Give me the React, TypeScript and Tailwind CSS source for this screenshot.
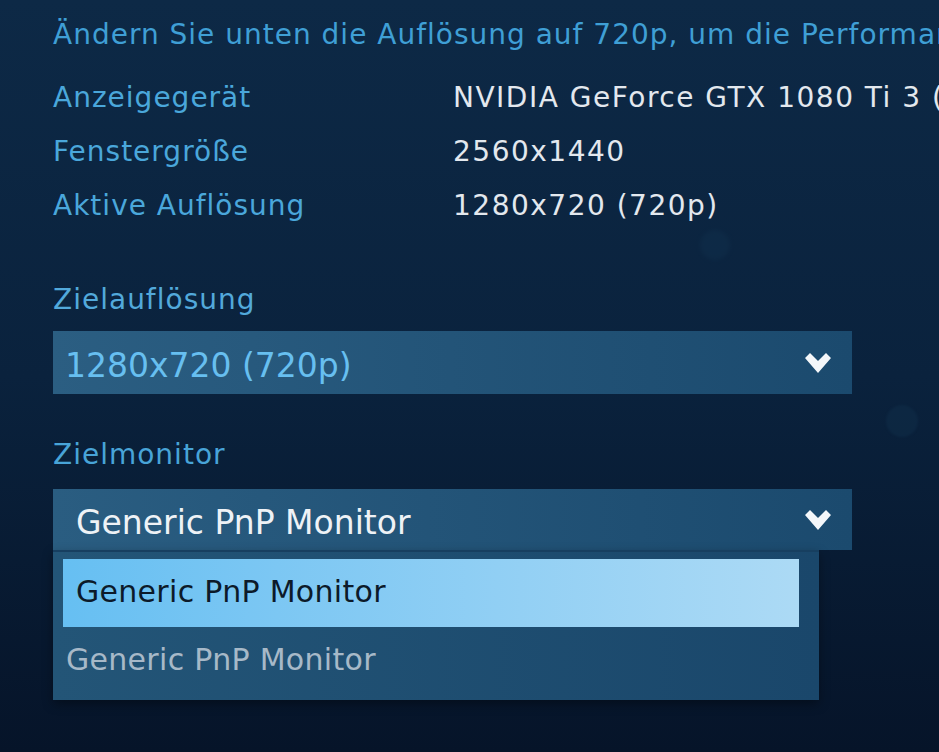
const rows = [
  ["Anzeigegerät", "NVIDIA GeForce GTX 1080 Ti 3 (NVIDIA)"],
  ["Fenstergröße", "2560x1440"],
  ["Aktive Auflösung", "1280x720 (720p)"],
];

function Chevron() {
  return (
    <svg width="26" height="20" viewBox="0 0 26 20" className="shrink-0">
      <polygon points="0,5 5,0 13,8 21,0 26,5 13,20" fill="#f4f7fa" />
    </svg>
  );
}

export default function App() {
  return (
    <div className="relative h-[752px] w-[939px] overflow-hidden bg-linear-to-b from-[#0d2946] via-[#0a223d] to-[#061429] font-['DejaVu_Sans',sans-serif]">
      <div className="pointer-events-none absolute left-[700px] top-[230px] h-[30px] w-[30px] rounded-full bg-[#12324f] opacity-40 blur-[2px]" />
      <div className="pointer-events-none absolute left-[886px] top-[405px] h-[32px] w-[32px] rounded-full bg-[#0f2c47] opacity-60 blur-[1px]" />

      <div className="relative whitespace-nowrap pl-[53px] pt-[17px]">
        <div className="h-[36px] text-[28px] leading-[36px] tracking-[1px] text-[#3f9fd5]">
          Ändern Sie unten die Auflösung auf 720p, um die Performance zu verbessern.
        </div>

        <div className="mt-[18px]">
          {rows.map(([label, value]) => (
            <div key={label} className="flex h-[54px] items-center leading-[54px]">
              <div className="w-[400px] shrink-0 text-[28px] tracking-[1px] text-[#4aa7db]">{label}</div>
              <div className="text-[28px] tracking-[1.5px] text-[#e3e8ee]">{value}</div>
            </div>
          ))}
        </div>

        <div className="mt-[49px] h-[36px] text-[28px] leading-[36px] tracking-[1px] text-[#52a9db]">
          Zielauflösung
        </div>
        <div className="mt-[13px] flex h-[63px] w-[799px] items-center justify-between bg-linear-to-r from-[#2b5e82] to-[#1b4a6e] pl-[12px] pr-[21px]">
          <span className="pt-[6px] text-[33px] leading-[57px] text-[#67bff0]">1280x720 (720p)</span>
          <Chevron />
        </div>

        <div className="mt-[43px] h-[36px] text-[28px] leading-[36px] tracking-[1px] text-[#48a4d8]">
          Zielmonitor
        </div>
        <div className="relative mt-[16px] w-[799px]">
          <div className="flex h-[61px] items-center justify-between bg-linear-to-r from-[#2a5d81] to-[#1b4a6e] pl-[23px] pr-[21px]">
            <span className="pt-[5px] text-[33px] leading-[55px] text-[#eef2f6]">Generic PnP Monitor</span>
            <Chevron />
          </div>
          <div className="absolute left-0 top-full w-[766px] border-t-[2px] border-[#173f60] bg-linear-to-r from-[#235577] to-[#1a476b] pb-[5px] pt-[7px] shadow-[0_4px_10px_rgba(0,0,0,0.35)]">
            <div className="ml-[10px] mr-[20px] h-[68px] bg-linear-to-r from-[#66bff2] to-[#acdaf5] pl-[13px] text-[30px] leading-[66px] tracking-[0.3px] text-[#0c1a2a]">
              Generic PnP Monitor
            </div>
            <div className="h-[68px] pl-[13px] text-[30px] leading-[66px] tracking-[0.3px] text-[#a7b9c8]">
              Generic PnP Monitor
            </div>
          </div>
        </div>
      </div>
    </div>
  );
}
